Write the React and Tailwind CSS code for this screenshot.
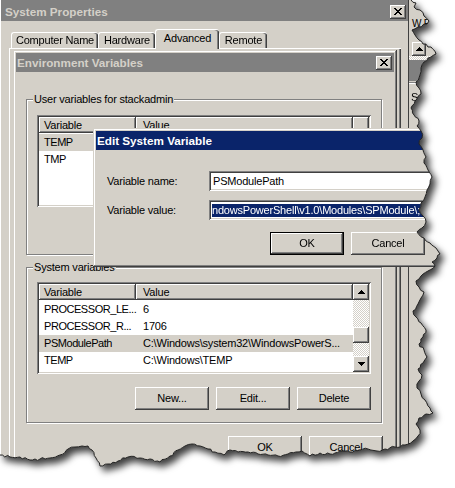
import React from 'react';

// classic 3D bevels
const raised =
  'bg-[#d4d0c8] shadow-[inset_-1px_-1px_#404040,inset_1px_1px_#ffffff,inset_-2px_-2px_#808080,inset_2px_2px_#d4d0c8]';
const sunken =
  'shadow-[inset_1px_1px_#808080,inset_-1px_-1px_#ffffff,inset_2px_2px_#404040,inset_-2px_-2px_#d4d0c8]';
const frame =
  'bg-[#d4d0c8] shadow-[inset_-1px_-1px_#404040,inset_1px_1px_#d4d0c8,inset_-2px_-2px_#808080,inset_2px_2px_#ffffff]';
const headerCell = 'shadow-[inset_-1px_-1px_#404040,inset_1px_1px_#ffffff,inset_-2px_-2px_#808080]';
const etched = 'border border-[#808080] shadow-[inset_1px_1px_#ffffff,1px_1px_#ffffff]';

// torn paper outline, clockwise from the top edge down the right side and back along the bottom
const EDGE = [
  [411, 0], [416, 3], [414, 7], [420, 10], [424, 16], [429, 21], [427, 24], [418, 27], [412, 30], [415, 35],
  [419, 40], [423, 44], [431, 47], [436, 54], [428, 58], [424, 62], [421, 68], [420, 75], [416, 82], [419, 88],
  [421, 94], [415, 101], [411, 108], [414, 115], [419, 121], [417, 126], [421, 131], [422, 138], [419, 144],
  [423, 150], [426, 157], [424, 163], [428, 170], [432, 177], [430, 184], [427, 190], [425, 197], [421, 203],
  [419, 210], [423, 216], [426, 222], [422, 228], [417, 232], [424, 238], [430, 243], [436, 248], [440, 254],
  [437, 258], [432, 262], [435, 266], [428, 271], [421, 276], [416, 281], [419, 287], [424, 292], [421, 298],
  [418, 304], [413, 311], [416, 317], [421, 323], [426, 330], [423, 337], [419, 344], [424, 350], [427, 357],
  [423, 363], [418, 369], [422, 375], [419, 381], [417, 388], [421, 394], [425, 400], [430, 408], [433, 413],
  [426, 414], [419, 418], [416, 424], [420, 430], [418, 436], [413, 441], [405, 445], [395, 447], [385, 449],
  [377, 451], [368, 449], [360, 450], [350, 452], [340, 451], [330, 454], [320, 453], [310, 456], [302, 451],
  [296, 452], [288, 454], [278, 456], [268, 455], [258, 454], [248, 452], [238, 452], [230, 450], [224, 455],
  [215, 452], [208, 449], [200, 446], [192, 444], [185, 446], [178, 450], [170, 456], [160, 462], [150, 459],
  [140, 458], [128, 457], [118, 461], [108, 464], [100, 466], [96, 458], [92, 450], [88, 446], [82, 446],
  [75, 447], [68, 449], [60, 455], [50, 458], [40, 459], [30, 460], [20, 457], [10, 457], [0, 455],
];

function roughen(points) {
  let seed = 17;
  const rnd = () => {
    seed = (seed * 9301 + 49297) % 233280;
    return seed / 233280;
  };
  const out = [];
  points.forEach((p, i) => {
    out.push(p);
    const q = points[i + 1];
    if (!q) return;
    const dx = q[0] - p[0];
    const dy = q[1] - p[1];
    const len = Math.hypot(dx, dy);
    const n = Math.floor(len / 2.5);
    const nx = -dy / len;
    const ny = dx / len;
    for (let k = 1; k < n; k++) {
      const t = k / n;
      const o = (rnd() - 0.5) * 2.4;
      out.push([p[0] + dx * t + nx * o, p[1] + dy * t + ny * o]);
    }
  });
  return out.map(([x, y]) => `${x.toFixed(1)} ${y.toFixed(1)}`).join(' L');
}

const edgeLine = roughen(EDGE);
const clipShape = `M0 0 L${edgeLine} Z`;
const edgeStroke = `M${edgeLine}`;

const X_BITS = ['11000011', '01100110', '00111100', '00011000', '00111100', '01100110', '11000011'];
const UP = ['0001000', '0011100', '0111110', '1111111'];
const DOWN = ['1111111', '0111110', '0011100', '0001000'];

function Bitmap({ bits }) {
  return (
    <svg width={bits[0].length} height={bits.length} viewBox={`0 0 ${bits[0].length} ${bits.length}`}>
      {bits.map((row, y) =>
        row.split('').map((b, x) => (b === '1' ? <rect key={`${x}-${y}`} x={x} y={y} width="1" height="1" fill="#000" /> : null))
      )}
    </svg>
  );
}

function CloseButton() {
  return (
    <div className={`${raised} w-[16px] h-[14px] flex items-center justify-center shrink-0`}>
      <Bitmap bits={X_BITS} />
    </div>
  );
}

function TitleBar({ title, active }) {
  return (
    <div
      className={`h-[19px] shrink-0 flex items-center justify-between pl-[1px] pr-[2px] ${
        active ? 'bg-[#0a246a] text-white' : 'bg-[#808080] text-[#d4d0c8]'
      }`}
    >
      <span className="font-bold text-[11.7px] tracking-normal whitespace-nowrap">{title}</span>
      {!active && <CloseButton />}
    </div>
  );
}

function Button({ children, primary }) {
  return (
    <div
      className={`${raised} w-[74px] h-[23px] shrink-0 flex items-center justify-center ${
        primary ? 'border border-black' : ''
      }`}
    >
      {children}
    </div>
  );
}

function Tab({ label, width, active }) {
  return (
    <div
      className={`${width} ${
        active ? 'h-[20px] relative top-[1px] z-10 pb-[3px]' : 'h-[16px]'
      } shrink-0 bg-[#d4d0c8] border-t border-l border-white rounded-t-[3px] shadow-[inset_-1px_0_#404040,inset_-2px_0_#808080] flex items-center justify-center`}
    >
      {label}
    </div>
  );
}

function ScrollBar() {
  return (
    <div className="w-[16px] shrink-0 flex flex-col">
      <div className={`${raised} h-[16px] flex items-center justify-center`}>
        <Bitmap bits={UP} />
      </div>
      <div className="flex-1 flex flex-col bg-[repeating-conic-gradient(#d4d0c8_0_25%,#ffffff_0_50%)] bg-[length:2px_2px]">
        <div className={`${raised} h-[16px] mt-[27px]`} />
      </div>
      <div className={`${raised} h-[16px] flex items-center justify-center`}>
        <Bitmap bits={DOWN} />
      </div>
    </div>
  );
}

function ListView({ rows, scroll }) {
  return (
    <div className={`${sunken} bg-white h-[92px] p-[2px] flex overflow-hidden`}>
      <div className="flex-1 min-w-0 flex flex-col overflow-hidden">
        <div className="flex h-[16px] shrink-0 bg-[#d4d0c8]">
          <div className={`${headerCell} w-[97px] pl-[5px] flex items-center`}>Variable</div>
          <div className={`${headerCell} w-[217px] pl-[7px] flex items-center`}>Value</div>
          {!scroll && <div className={`${headerCell} flex-1`} />}
        </div>
        <div className="pt-[1px]">
          {rows.map(([name, value, selected]) => (
            <div key={name + value} className={`flex h-[17px] items-center ${selected ? 'bg-[#d4d0c8]' : ''}`}>
              <div className="w-[97px] shrink-0 pl-[5px] whitespace-nowrap tracking-[-0.45px]">{name}</div>
              <div className="pl-[7px] whitespace-nowrap">{value}</div>
            </div>
          ))}
        </div>
      </div>
      {scroll && <ScrollBar />}
    </div>
  );
}

function GroupBox({ label, className, children }) {
  return (
    <fieldset className={`${etched} ${className}`}>
      <legend className="ml-[6px] px-[1px] leading-[13px] bg-[#d4d0c8]">{label}</legend>
      {children}
    </fieldset>
  );
}

// the value column of this list sits behind the edit dialog
const userVars = [
  ['TEMP', '', true],
  ['TMP', ''],
];

const systemVars = [
  ['PROCESSOR_LE...', '6'],
  ['PROCESSOR_R...', '1706'],
  ['PSModulePath', 'C:\\Windows\\system32\\WindowsPowerS...', true],
  ['TEMP', 'C:\\Windows\\TEMP'],
  ['TMP', 'C:\\Windows\\TEMP'],
];

export default function App() {
  return (
    <div className="relative w-[455px] h-[488px] bg-white overflow-hidden font-['Liberation_Sans',Arial,sans-serif] text-[11px] tracking-[-0.2px] text-black">
      <svg width="0" height="0" className="absolute">
        <defs>
          <clipPath id="torn" clipPathUnits="userSpaceOnUse">
            <path d={clipShape} />
          </clipPath>
        </defs>
      </svg>

      <div className="absolute inset-0 [filter:drop-shadow(4px_5px_3.5px_rgba(0,0,0,0.75))]">
        <div className="absolute inset-0 [clip-path:url(#torn)]">
          {/* window peeking out behind */}
          <div className="absolute left-[409px] top-0 w-[46px] h-[488px] bg-[#d4d0c8] flex flex-col">
            <div className="mt-[19px] h-[10px] pl-[3px] leading-[10px] text-[10px]">W F</div>
            <div className={`${raised} ml-[3px] mt-[13px] w-[14px] h-[14px] flex items-center justify-center`}>
              <Bitmap bits={UP} />
            </div>
            <div className="h-[4px] bg-[repeating-conic-gradient(#d4d0c8_0_25%,#ffffff_0_50%)] bg-[length:2px_2px]" />
            <div className="h-[21px] bg-[#808080]" />
            <div className="h-[1px] mt-[1px] bg-[#808080]" />
            <div className="h-[1px] bg-white" />
            <div className="mt-[8px] pl-[2px] leading-[10px]">S</div>
          </div>

          {/* System Properties */}
          <div className="absolute left-0 top-0 w-[409px] h-[488px] bg-[#d4d0c8] border-l border-l-white border-r border-r-[#404040] flex flex-col">
            <div className="h-[21px] pt-[2px] shrink-0 bg-[#808080] flex items-center justify-between pl-[4px] pr-[2px]">
              <span className="font-bold text-[11.7px] tracking-normal text-[#d4d0c8]">System Properties</span>
              <CloseButton />
            </div>
            <div className="mt-[8px] h-[19px] shrink-0 flex items-end pl-[10px]">
              <Tab label="Computer Name" width="w-[87px]" />
              <Tab label="Hardware" width="w-[57px]" />
              <Tab label="Advanced" width="w-[64px]" active />
              <Tab label="Remote" width="w-[48px]" />
            </div>
            <div className="ml-[8px] w-[392px] flex-1 border-t border-l border-white shadow-[inset_-1px_0_#404040,inset_-2px_0_#808080]" />
          </div>

          {/* Environment Variables */}
          <div className={`absolute left-[13px] top-[50px] w-[384px] h-[438px] ${frame} p-[3px] flex flex-col`}>
            <TitleBar title="Environment Variables" />
            <GroupBox label="User variables for stackadmin" className="ml-[10px] mt-[21px] w-[356px]">
              <div className="px-[10px] pt-[9px] pb-[47px]">
                <ListView rows={userVars} />
              </div>
            </GroupBox>
            <GroupBox label="System variables" className="ml-[10px] mt-[6px] w-[356px]">
              <div className="px-[10px] pt-[8px] pb-[12px]">
                <ListView rows={systemVars} scroll />
                <div className="flex justify-end gap-[7px] mt-[13px]">
                  <Button>New...</Button>
                  <Button>Edit...</Button>
                  <Button>Delete</Button>
                </div>
              </div>
            </GroupBox>
            <div className="flex justify-end gap-[7px] mt-[13px] pr-[11px]">
              <Button>OK</Button>
              <Button>Cancel</Button>
            </div>
          </div>

          {/* Edit System Variable */}
          <div className={`absolute left-[93px] top-[128px] w-[362px] h-[139px] ${frame} p-[3px] flex flex-col`}>
            <TitleBar title="Edit System Variable" active />
            <div className="flex flex-col pl-[11px] pt-[21px]">
              <div className="flex items-center h-[20px]">
                <div className="w-[102px] shrink-0">Variable name:</div>
                <div className={`${sunken} bg-white h-[20px] w-[240px] shrink-0 pl-[4px] flex items-center`}>PSModulePath</div>
              </div>
              <div className="flex items-center h-[20px] mt-[9px]">
                <div className="w-[102px] shrink-0">Variable value:</div>
                <div className={`${sunken} bg-white h-[20px] w-[240px] shrink-0 pl-[3px] flex items-center overflow-hidden whitespace-nowrap`}>
                  <span className="bg-[#0a246a] text-white leading-[13px]">
                    ndowsPowerShell\v1.0\Modules\SPModule\;C:\Program Files
                  </span>
                </div>
              </div>
              <div className="flex gap-[7px] mt-[12px] pl-[163px]">
                <Button primary>OK</Button>
                <Button>Cancel</Button>
              </div>
            </div>
          </div>
        </div>

        <svg width="455" height="488" className="absolute inset-0 pointer-events-none">
          <path d={edgeStroke} fill="none" stroke="#222222" strokeWidth="1" />
        </svg>
      </div>
    </div>
  );
}
